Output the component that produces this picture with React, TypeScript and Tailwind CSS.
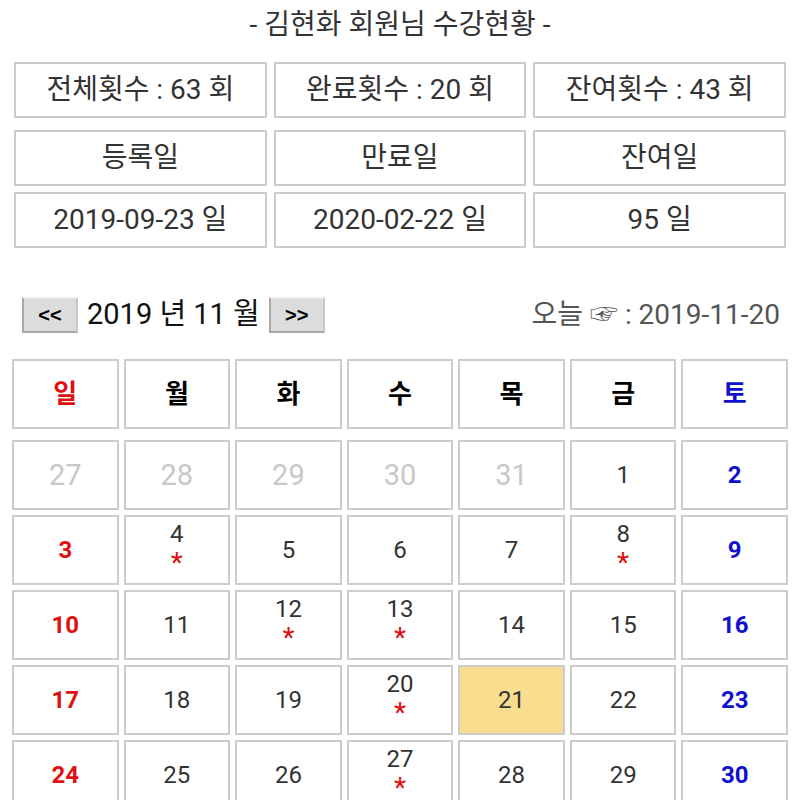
type Day = { d: number; other?: boolean; star?: boolean; today?: boolean };

const weeks: Day[][] = [
  [{ d: 27, other: true }, { d: 28, other: true }, { d: 29, other: true }, { d: 30, other: true }, { d: 31, other: true }, { d: 1 }, { d: 2 }],
  [{ d: 3 }, { d: 4, star: true }, { d: 5 }, { d: 6 }, { d: 7 }, { d: 8, star: true }, { d: 9 }],
  [{ d: 10 }, { d: 11 }, { d: 12, star: true }, { d: 13, star: true }, { d: 14 }, { d: 15 }, { d: 16 }],
  [{ d: 17 }, { d: 18 }, { d: 19 }, { d: 20, star: true }, { d: 21, today: true }, { d: 22 }, { d: 23 }],
  [{ d: 24 }, { d: 25 }, { d: 26 }, { d: 27, star: true }, { d: 28 }, { d: 29 }, { d: 30 }],
];

const weekdays = ["일", "월", "화", "수", "목", "금", "토"];

function InfoBox({ children }: { children: React.ReactNode }) {
  return (
    <div className="flex items-center justify-center border-2 border-[#cccccc] text-[28px] text-[#333333]">
      {children}
    </div>
  );
}

function DateCell({ day, col }: { day: Day; col: number }) {
  let color = "text-[#333333]";
  if (day.other) color = "text-[#c8c8c8]";
  else if (col === 0) color = "text-[#e01010] font-bold";
  else if (col === 6) color = "text-[#1010cc] font-bold";

  return (
    <div
      className={`flex h-[70px] flex-col items-center border-2 border-[#cccccc] ${
        day.star ? "justify-start pt-[4px]" : "justify-center"
      } ${day.today ? "bg-[#f8dd8e]" : "bg-white"}`}
    >
      <span className={`${day.other ? "text-[29px]" : "text-[24px]"} leading-[26px] ${color}`}>{day.d}</span>
      {day.star && <span className="mt-[3px] h-[26px] text-[28px] leading-[26px] text-[#e01010]">*</span>}
    </div>
  );
}

function NavButton({ label }: { label: string }) {
  return (
    <button className="flex h-[36px] w-[56px] items-center justify-center border-2 border-t-[#ececec] border-l-[#a8a8a8] border-r-[#c8c8c8] border-b-[#a8a8a8] bg-[#dcdcdc] font-['Liberation_Sans',sans-serif] text-[20px] font-bold leading-none text-black">
      {label}
    </button>
  );
}

export default function App() {
  return (
    <div className="min-h-screen w-[800px] bg-white font-[Roboto,'Noto_Sans_CJK_KR',sans-serif]">
      <div className="flex h-[50px] items-center justify-center text-[28px] text-[#333333]">
        - 김현화 회원님 수강현황 -
      </div>

      <div className="mt-[12px] grid h-[56px] grid-cols-3 gap-x-[7px] px-[14px]">
        <InfoBox>전체횟수 : 63 회</InfoBox>
        <InfoBox>완료횟수 : 20 회</InfoBox>
        <InfoBox>잔여횟수 : 43 회</InfoBox>
      </div>
      <div className="mt-[12px] grid h-[56px] grid-cols-3 gap-x-[7px] px-[14px]">
        <InfoBox>등록일</InfoBox>
        <InfoBox>만료일</InfoBox>
        <InfoBox>잔여일</InfoBox>
      </div>
      <div className="mt-[6px] grid h-[56px] grid-cols-3 gap-x-[7px] px-[14px]">
        <InfoBox>2019-09-23 일</InfoBox>
        <InfoBox>2020-02-22 일</InfoBox>
        <InfoBox>95 일</InfoBox>
      </div>

      <div className="mt-[49px] flex h-[36px] items-center justify-between pl-[22px] pr-[20px]">
        <div className="flex items-center gap-[9px]">
          <NavButton label="<<" />
          <span className="text-[29px] text-[#111111]">2019 년 11 월</span>
          <NavButton label=">>" />
        </div>
        <span className="text-[28px] text-[#555555]">오늘 ☞ : 2019-11-20</span>
      </div>

      <div className="mt-[26px] grid grid-cols-7 gap-x-[5px] px-[12px]">
        {weekdays.map((w, i) => (
          <div
            key={w}
            className={`flex h-[70px] items-center justify-center border-2 border-[#cccccc] text-[26px] font-bold ${
              i === 0 ? "text-[#e01010]" : i === 6 ? "text-[#1010cc]" : "text-black"
            }`}
          >
            {w}
          </div>
        ))}
      </div>

      <div className="mt-[11px] grid grid-cols-7 gap-x-[5px] gap-y-[5px] px-[12px]">
        {weeks.map((week, r) => week.map((day, c) => <DateCell key={`${r}-${c}`} day={day} col={c} />))}
      </div>
    </div>
  );
}
